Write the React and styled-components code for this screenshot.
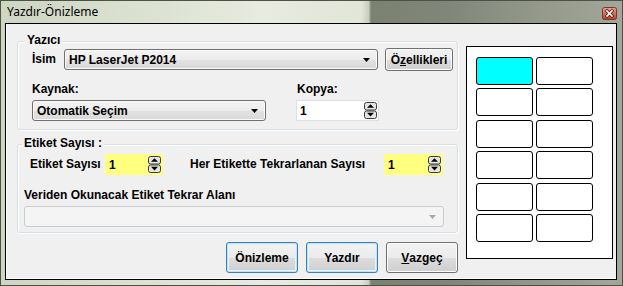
import React from "react";
import styled, { createGlobalStyle } from "styled-components";

const GlobalStyle = createGlobalStyle`
  html, body { margin: 0; padding: 0; background: #ffffff; }
  body {
    width: 623px; height: 286px; overflow: hidden;
    font-family: "Liberation Sans", Arial, sans-serif;
  }
  * { box-sizing: border-box; }
`;

const Window = styled.div`
  width: 623px;
  height: 286px;
  border: 1px solid #4d5247;
  background: linear-gradient(
    to right,
    #cdd6c2 0%,
    #d9e0cf 20%,
    #e7ebe0 42%,
    #e2e6d9 58%,
    #c8cfbd 59.2%,
    #7b8271 59.6%,
    #80877a 72%,
    #959a8c 88%,
    #a3a79a 100%
  );
  display: flex;
  flex-direction: column;
`;

const TitleBar = styled.div`
  height: 22px;
  display: flex;
  align-items: center;
  justify-content: space-between;
  padding: 0 5px 0 6px;
`;

const Title = styled.span`
  font-family: "Noto Sans", "Liberation Sans", sans-serif;
  font-size: 12px;
  color: #000;
  line-height: 16px;
`;

const CloseBtn = styled.span`
  display: flex;
  margin-top: 3px;
`;

const Client = styled.div`
  margin: 0 5px 5px 4px;
  height: 257px;
  border: 1px solid #000;
  background: #f0f0f0;
  box-shadow: inset 1px 0 0 #ffffff, inset 0 -1px 0 #ffffff;
  display: grid;
  grid-template-columns: 441px 147px;
  column-gap: 8px;
  padding: 17px 0 0 11px;
  align-items: start;
`;

const LeftCol = styled.div`
  display: flex;
  flex-direction: column;
`;

const Group = styled.div`
  position: relative;
  height: 89px;
  margin-top: ${(p) => p.$mt || 0}px;
  border: 1px solid #d5dfe5;
  border-radius: 3px;
  box-shadow: inset 1px 1px 0 #ffffff, 1px 1px 0 #ffffff;
  padding: ${(p) => p.$pad};
`;

const Legend = styled.span`
  position: absolute;
  top: -9px;
  left: ${(p) => p.$left}px;
  padding: 0 2px;
  background: #f0f0f0;
  font-weight: bold;
  font-size: 12px;
  line-height: 15px;
  color: #000;
`;

const Row = styled.div`
  display: flex;
  align-items: center;
  margin-left: ${(p) => p.$ml || 0}px;
`;

const Label = styled.span`
  font-weight: bold;
  font-size: 12px;
  line-height: 15px;
  color: #000;
  white-space: nowrap;
  display: block;
  width: ${(p) => (p.$w ? `${p.$w}px` : "auto")};
  margin-left: ${(p) => p.$ml || 0}px;
  padding-left: ${(p) => p.$pl || 0}px;
  margin-bottom: ${(p) => p.$mb || 0}px;
  margin-top: ${(p) => p.$mt || 0}px;
`;

const FieldGrid = styled.div`
  display: grid;
  grid-template-columns: ${(p) => p.$cols};
  column-gap: ${(p) => p.$gap}px;
  margin-top: ${(p) => p.$mt}px;
`;

const Combo = styled.div`
  position: relative;
  width: ${(p) => p.$w}px;
  height: 21px;
  border: 1px solid ${(p) => (p.$disabled ? "#c9ccd0" : "#707070")};
  border-radius: 3px;
  background: ${(p) =>
    p.$disabled
      ? "#f4f4f4"
      : "linear-gradient(#f3f3f3 0%, #ececec 50%, #e2e2e2 51%, #d9d9d9 100%)"};
  display: flex;
  align-items: center;
  padding-left: 4px;
  font-weight: bold;
  font-size: 12px;
  color: #000;
  box-shadow: ${(p) => (p.$disabled ? "none" : "inset 0 0 0 1px #fafafa")};
`;

const ComboArrow = styled.svg`
  position: absolute;
  right: 7px;
  top: 8px;
`;

const Spinner = styled.div`
  position: relative;
  width: ${(p) => p.$w}px;
  height: 21px;
  border: 1px solid ${(p) => (p.$yellow ? "#ffff80" : "#dcdfe4")};
  background: ${(p) => (p.$yellow ? "#ffff80" : "#ffffff")};
  display: flex;
  align-items: center;
  padding-left: 3px;
  font-weight: bold;
  font-size: 12px;
  color: #000;
`;

const SpinHolder = styled.span`
  position: absolute;
  right: 1px;
  top: 1px;
  display: flex;
`;

const Button = styled.button`
  width: ${(p) => p.$w}px;
  height: ${(p) => p.$h}px;
  margin-left: ${(p) => p.$ml || 0}px;
  border: 1px solid ${(p) => (p.$default ? "#3c7fb1" : "#707070")};
  border-radius: 3px;
  background: linear-gradient(#f2f2f2 0%, #ebebeb 50%, #dddddd 51%, #cfcfcf 100%);
  box-shadow: ${(p) =>
    p.$default
      ? "inset 0 0 0 1px #bfe3f7, inset 0 0 0 2px #e4f3fb"
      : "inset 0 0 0 1px #fcfcfc"};
  font-family: "Liberation Sans", Arial, sans-serif;
  font-weight: bold;
  font-size: 12px;
  color: #000;
  padding: 0;
  display: flex;
  align-items: center;
  justify-content: center;
`;

const U = styled.span`
  text-decoration: underline;
  text-underline-offset: 1px;
`;

const ButtonRow = styled.div`
  display: flex;
  justify-content: flex-end;
  gap: 8px;
  margin-top: 9px;
`;

const Preview = styled.div`
  margin-top: 5px;
  width: 147px;
  height: 213px;
  border: 1px solid #000;
  background: #ffffff;
  display: grid;
  grid-template-columns: 57px 57px;
  grid-template-rows: repeat(6, 28px);
  column-gap: 3px;
  row-gap: 3.4px;
  padding: 10px 0 0 9px;
  align-content: start;
`;

const LabelCell = styled.div`
  border: 1px solid #000;
  border-radius: 3px;
  background: ${(p) => (p.$active ? "#00ffff" : "#ffffff")};
`;

const Arrow = ({ disabled }) => (
  <ComboArrow width="7" height="4" viewBox="0 0 7 4">
    <path d="M0 0 L7 0 L3.5 4 Z" fill={disabled ? "#a8a8a8" : "#000"} />
  </ComboArrow>
);

const SpinIcon = () => (
  <svg width="13" height="17" viewBox="0 0 13 17">
    <rect x="0.5" y="0.5" width="12" height="7.5" rx="2" fill="#e4e4e4" stroke="#3a3a3a" />
    <path d="M6.5 2.2 L10 5.8 L3 5.8 Z" fill="#000" />
    <rect x="0.5" y="9" width="12" height="7.5" rx="2" fill="#e4e4e4" stroke="#3a3a3a" />
    <path d="M3 10.8 L10 10.8 L6.5 14.5 Z" fill="#000" />
  </svg>
);

const CloseIcon = () => (
  <svg width="15" height="13" viewBox="0 0 15 13">
    <defs>
      <linearGradient id="cg" x1="0" y1="0" x2="0" y2="1">
        <stop offset="0" stopColor="#e5a192" />
        <stop offset="0.5" stopColor="#d2705b" />
        <stop offset="1" stopColor="#b8412b" />
      </linearGradient>
    </defs>
    <rect x="0.5" y="0.5" width="14" height="12" rx="2" fill="url(#cg)" stroke="#7d3326" />
    <path d="M5 4 L10 9 M10 4 L5 9" stroke="#5a2318" strokeWidth="3.2" strokeLinecap="square" />
    <path d="M5 4 L10 9 M10 4 L5 9" stroke="#ffffff" strokeWidth="1.6" strokeLinecap="square" />
  </svg>
);

export default function App() {
  const cells = Array.from({ length: 12 }, (_, i) => i);
  return (
    <>
      <GlobalStyle />
      <Window>
        <TitleBar>
          <Title>Yazdır-Önizleme</Title>
          <CloseBtn>
            <CloseIcon />
          </CloseBtn>
        </TitleBar>
        <Client>
          <LeftCol>
            <Group $pad="6px 0 0 14px">
              <Legend $left={7}>Yazıcı</Legend>
              <Row>
                <Label $w={32}>İsim</Label>
                <Combo $w={314}>
                  HP LaserJet P2014
                  <Arrow />
                </Combo>
                <Button $w={68} $h={23} $ml={7}>
                  Ö<U>z</U>ellikleri
                </Button>
              </Row>
              <FieldGrid $cols="234px 83px" $gap={30} $mt={11}>
                <div>
                  <Label $mb={3}>Kaynak:</Label>
                  <Combo $w={234}>
                    Otomatik Seçim
                    <Arrow />
                  </Combo>
                </div>
                <div>
                  <Label $mb={3} $pl={1}>Kopya:</Label>
                  <Spinner $w={83}>
                    1
                    <SpinHolder>
                      <SpinIcon />
                    </SpinHolder>
                  </Spinner>
                </div>
              </FieldGrid>
            </Group>
            <Group $mt={14} $pad="9px 0 0 6px">
              <Legend $left={4}>Etiket Sayısı :</Legend>
              <Row $ml={6}>
                <Label $w={75}>Etiket Sayısı</Label>
                <Spinner $w={58} $yellow>
                  1
                  <SpinHolder>
                    <SpinIcon />
                  </SpinHolder>
                </Spinner>
                <Label $w={194} $ml={27}>Her Etikette Tekrarlanan Sayısı</Label>
                <Spinner $w={59} $yellow>
                  1
                  <SpinHolder>
                    <SpinIcon />
                  </SpinHolder>
                </Spinner>
              </Row>
              <Label $mt={13} $mb={3}>Veriden Okunacak Etiket Tekrar Alanı</Label>
              <Combo $w={420} $disabled>
                <Arrow disabled />
              </Combo>
            </Group>
            <ButtonRow>
              <Button $w={72} $h={31} $default>Önizleme</Button>
              <Button $w={72} $h={31} $default>Yazdır</Button>
              <Button $w={72} $h={31}>
                <U>V</U>azgeç
              </Button>
            </ButtonRow>
          </LeftCol>
          <Preview>
            {cells.map((i) => (
              <LabelCell key={i} $active={i === 0} />
            ))}
          </Preview>
        </Client>
      </Window>
    </>
  );
}
